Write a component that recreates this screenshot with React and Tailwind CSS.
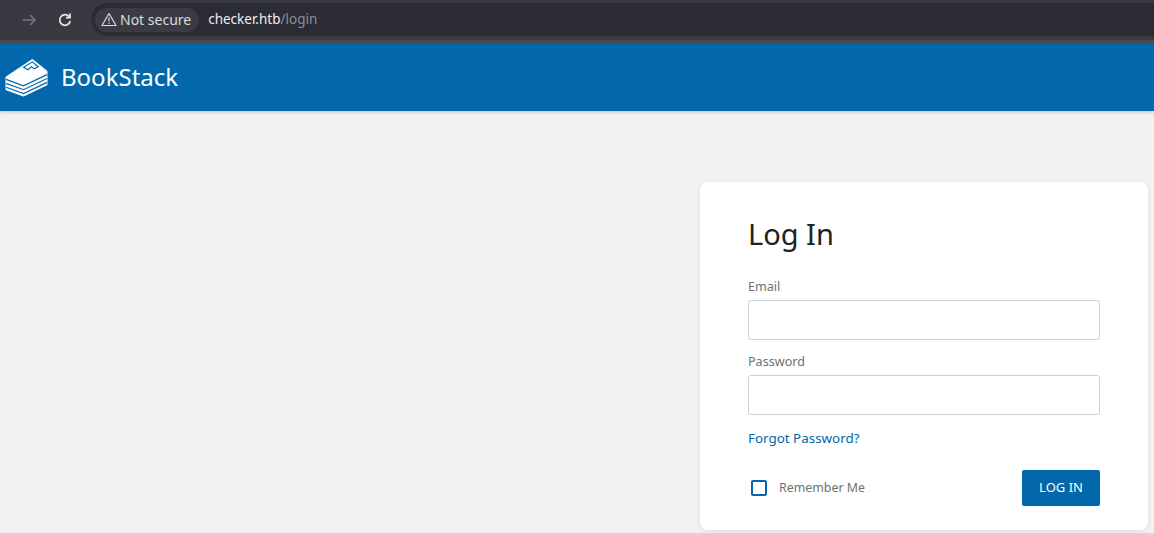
import React from 'react';

const Logo = () => (
  <svg width="43" height="39" viewBox="0 0 44 39" fill="none" className="shrink-0">
    {/* white stack silhouette */}
    <path d="M1 19 L28 1 L43 13 L43 27 L19 38.5 L1 32 Z" fill="#fff" strokeLinejoin="round" stroke="#fff" />
    {/* page edges */}
    <path d="M1 21.5 L19 28 L43 16.5" stroke="#0268ab" strokeWidth="1.4" />
    <path d="M1 25.5 L19 32 L43 20.5" stroke="#0268ab" strokeWidth="1.2" />
    <path d="M1 29.5 L19 36 L43 24.5" stroke="#0268ab" strokeWidth="1.2" />
    {/* bookmark */}
    <path d="M19 9 L28 3.5 L34 8.5 L30 10.5 L27 8.5 L23.5 11.5 Z" stroke="#0268ab" strokeWidth="1.2" fill="#fff" />
  </svg>
);

const Field = ({ label, top }) => (
  <div className={top}>
    <label className="block text-[12.6px] leading-[18px] text-[#707070] mb-[5px] relative top-[1px]">{label}</label>
    <div className="h-10 border border-[#cfcfcf] rounded-[3px] bg-white" />
  </div>
);

const App = () => {
  return (
    <div className="h-[533px] overflow-hidden flex flex-col bg-[#f2f2f2] font-['Noto_Sans',sans-serif]">
      {/* Browser bar */}
      <div className="h-[43px] shrink-0 flex items-center bg-[#393a41] border-b-[3px] border-[#4b4c51] pb-[1px]">
        <svg width="16" height="16" viewBox="0 0 16 16" fill="none" stroke="#75767c" strokeWidth="1.5" className="ml-[21px]">
          <path d="M1.5 8 H14 M9 3 L14 8 L9 13" />
        </svg>
        <svg width="16" height="16" viewBox="0 0 16 16" fill="none" stroke="#e8e8ea" strokeWidth="1.7" className="ml-[20px]">
          <path d="M12.4 5 A5.3 5.3 0 1 0 13.2 9" />
          <path d="M13 1.5 V5.6 H8.9" />
        </svg>
        <div className="ml-[18px] h-[33px] w-[1063px] rounded-l-full bg-[#2a2b35] flex items-center pl-[4px] text-[14px]">
          <div className="h-[24px] flex items-center gap-[3px] rounded-full bg-[#3a3b44] px-[6px] pr-[8px] text-[#dcdcde]">
            <svg width="16" height="15" viewBox="0 0 16 15" fill="none" stroke="#dcdcde" strokeWidth="1.2">
              <path d="M8 1.5 L15 13.5 H1 Z" strokeLinejoin="round" />
              <path d="M8 5.5 V9.5 M8 10.7 V12" />
            </svg>
            <span>Not secure</span>
          </div>
          <span className="ml-[9px] text-[13.5px] text-[#eeeef0]">checker.htb<span className="text-[#8e8f96]">/login</span></span>
        </div>
      </div>

      {/* App header */}
      <header className="h-[68px] shrink-0 flex items-center bg-[#0268ab] shadow-[0_1px_4px_rgba(0,0,0,0.2)] pl-[5px] relative">
        <Logo />
        <span className="ml-[13px] text-[24px] text-white">BookStack</span>
      </header>

      {/* Content */}
      <main className="flex justify-end pr-[6px] pt-[71px]">
        <div className="w-[448px] h-[348px] bg-white rounded-[8px] shadow-[0_1px_6px_rgba(0,0,0,0.08)] px-[48px] pt-[30px]">
          <h1 className="text-[29px] leading-[44px] font-normal text-[#222222]">Log In</h1>
          <Field label="Email" top="mt-[21px]" />
          <Field label="Password" top="mt-[12px]" />
          <a href="#" className="block mt-[14px] text-[13.4px] leading-[18px] text-[#0268ab]">Forgot Password?</a>
          <div className="mt-[23px] flex items-center justify-between">
            <label className="flex items-center pl-[3px]">
              <span className="w-4 h-4 rounded-[2px] border-2 border-[#0268ab] bg-white" />
              <span className="ml-[12px] text-[12.4px] text-[#707070]">Remember Me</span>
            </label>
            <button className="w-[78px] h-[36px] rounded-[2px] bg-[#0268ab] text-white text-[13px]">LOG IN</button>
          </div>
        </div>
      </main>
    </div>
  );
};

export default App;
